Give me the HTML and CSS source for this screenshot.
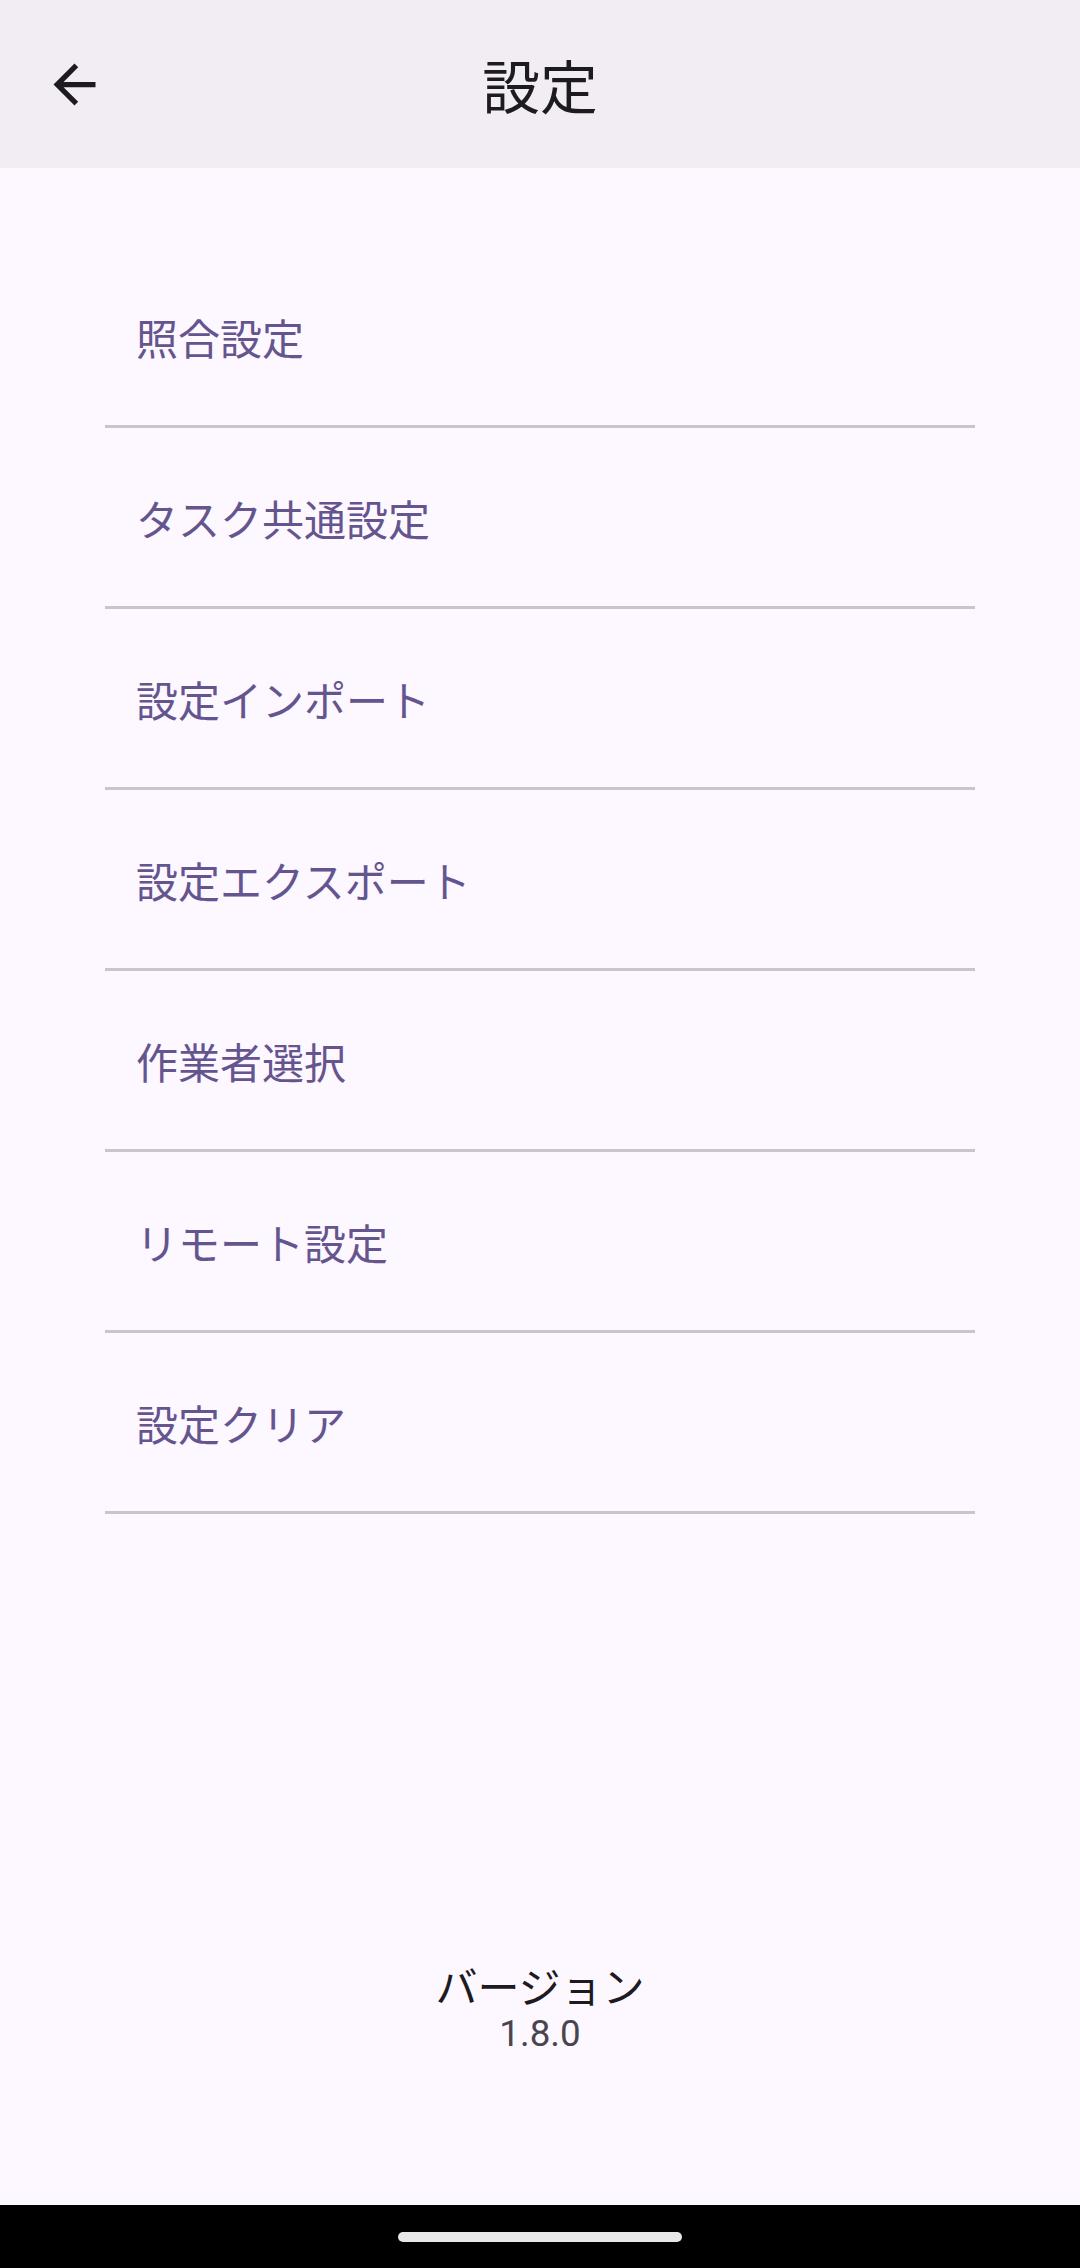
FILE: index.html
```html
<!DOCTYPE html>
<html lang="ja">
<head>
<meta charset="utf-8">
<title>設定</title>
<link rel="stylesheet" href="styles.css">
</head>
<body>
<div class="screen">
  <header class="topbar">
    <div class="nav-cell">
      <span class="nav-icon" aria-label="戻る">
        <svg viewBox="0 0 24 24" width="63" height="63"><path d="M20 11H7.83l5.59-5.59L12 4l-8 8 8 8 1.41-1.41L7.83 13H20v-2z"/></svg>
      </span>
    </div>
    <h1 class="title">設定</h1>
    <div class="nav-cell"></div>
  </header>
  <main class="content">
    <ul class="menu">
      <li class="menu-item">照合設定</li>
      <li class="menu-item">タスク共通設定</li>
      <li class="menu-item">設定インポート</li>
      <li class="menu-item">設定エクスポート</li>
      <li class="menu-item">作業者選択</li>
      <li class="menu-item">リモート設定</li>
      <li class="menu-item">設定クリア</li>
    </ul>
    <div class="spacer"></div>
    <div class="version">
      <div class="version-label">バージョン</div>
      <div class="version-number">1.8.0</div>
    </div>
  </main>
  <div class="navbar"><div class="handle"></div></div>
</div>
</body>
</html>
```
FILE: styles.css
```css
* { box-sizing: border-box; }
html, body {
  margin: 0;
  padding: 0;
  background: #fdf7ff;
}
body {
  font-family: Roboto, "Noto Sans CJK JP", sans-serif;
  color: #1d1b20;
}
.screen {
  width: 1080px;
  height: 2268px;
  display: flex;
  flex-direction: column;
}
.topbar {
  height: 168px;
  flex: 0 0 168px;
  background: #f2edf2;
  display: grid;
  grid-template-columns: 1fr auto 1fr;
  align-items: center;
}
.nav-cell {
  display: flex;
  align-items: center;
  padding-left: 43px;
}
.nav-icon {
  width: 63px;
  height: 63px;
  display: block;
}
.nav-icon svg {
  display: block;
  fill: #1d1b20;
}
.title {
  margin: 0;
  font-family: "Noto Sans CJK JP", sans-serif;
  font-weight: 400;
  font-size: 57.75px;
  line-height: 74px;
  color: #1d1b20;
  padding-top: 0;
}
.content {
  flex: 1;
  display: flex;
  flex-direction: column;
}
.menu {
  list-style: none;
  margin: 0;
  padding: 79px 105px 0;
}
.menu-item {
  height: 181px;
  border-bottom: 3px solid #cac4d0;
  display: flex;
  align-items: center;
  padding-left: 31px;
  padding-top: 2px;
  font-family: "Noto Sans CJK JP", sans-serif;
  font-size: 42px;
  line-height: 56px;
  color: #65558f;
}
.spacer { flex: 1; }
.version {
  display: flex;
  flex-direction: column;
  align-items: center;
  margin-bottom: 151px;
}
.version-label {
  font-family: "Noto Sans CJK JP", sans-serif;
  font-size: 42px;
  line-height: 58px;
  color: #1d1b20;
}
.version-number {
  font-family: Roboto, sans-serif;
  font-size: 36.75px;
  line-height: 40px;
  color: #49454f;
}
.navbar {
  height: 63px;
  flex: 0 0 63px;
  background: #000;
  display: flex;
  justify-content: center;
  padding-top: 27px;
}
.handle {
  width: 284px;
  height: 10px;
  border-radius: 5px;
  background: #e8e8e8;
}
```
